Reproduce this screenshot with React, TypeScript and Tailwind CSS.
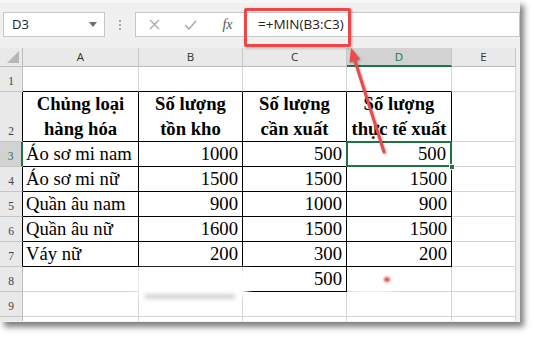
import React from 'react';

type DataRow = { n: number; a: string; b: string; c: string; d: string };

const rows: DataRow[] = [
  { n: 3, a: 'Áo sơ mi nam', b: '1000', c: '500', d: '500' },
  { n: 4, a: 'Áo sơ mi nữ', b: '1500', c: '1500', d: '1500' },
  { n: 5, a: 'Quần âu nam', b: '900', c: '1000', d: '900' },
  { n: 6, a: 'Quần âu nữ', b: '1600', c: '1500', d: '1500' },
  { n: 7, a: 'Váy nữ', b: '200', c: '300', d: '200' },
];

const heads = [
  ['Chủng loại', 'hàng hóa'],
  ['Số lượng', 'tồn kho'],
  ['Số lượng', 'cần xuất'],
  ['Số lượng', 'thực tế xuất'],
];

const grid = 'border-r border-b border-[#d4d4d4]';
const blackAll = 'border-r border-b border-black';
const blackBottom = 'border-r border-b border-r-[#d4d4d4] border-b-black';

const RowHead = ({ n, active, dark }: { n: string; active?: boolean; dark?: boolean }) => (
  <div
    className={
      active
        ? 'flex items-end justify-center bg-[#d2d2d2] border-b border-b-[#c6c6c6] border-r-2 border-r-[#217346] text-[#217346] text-[11.5px] leading-[20px]'
        : dark
        ? 'flex items-end justify-center bg-[#e9e9e9] border-b border-b-[#c6c6c6] border-r border-r-black text-[#444] text-[11.5px] leading-[20px]'
        : 'flex items-end justify-center bg-[#e9e9e9] border-b border-b-[#c6c6c6] border-r border-r-[#bdbdbd] text-[#444] text-[11.5px] leading-[20px]'
    }
  >
    {n}
  </div>
);

export default function App() {
  return (
    <div className="relative w-[535px] h-[340px] bg-white overflow-hidden font-['Open_Sans',sans-serif]">
      <div className="w-[520px] h-[322px] bg-[#f0f0f0] shadow-[4px_5px_6px_rgba(0,0,0,0.5)]">
        {/* toolbar */}
        <div className="h-[48px] border-t-[3px] border-t-[#f7f7f7]">
          <div className="flex pt-[9px] h-[34px]">
            <div className="ml-[3px] w-[102px] h-[25px] bg-white border border-[#c6c6c6] flex items-center justify-between pl-[8px] pr-[7px]">
              <span className="text-[13px] text-[#222]">D3</span>
              <svg width="8" height="5" viewBox="0 0 8 5">
                <path d="M0 0h8L4 5z" fill="#6e6e6e" />
              </svg>
            </div>
            <div className="w-[30px] flex flex-col items-center justify-center gap-[2px]">
              <div className="w-[2px] h-[2px] bg-[#a6a6a6]" />
              <div className="w-[2px] h-[2px] bg-[#a6a6a6]" />
              <div className="w-[2px] h-[2px] bg-[#a6a6a6]" />
            </div>
            <div className="flex-1 h-[25px] bg-white border border-[#c6c6c6] flex items-center">
              <div className="w-[36px] flex justify-center">
                <svg width="11" height="11" viewBox="0 0 11 11">
                  <path d="M1 1l9 9M10 1l-9 9" stroke="#a9a9a9" strokeWidth="1.3" />
                </svg>
              </div>
              <div className="w-[37px] flex justify-center">
                <svg width="13" height="10" viewBox="0 0 13 10">
                  <path d="M1 5l4 4 7-8" stroke="#a9a9a9" strokeWidth="1.5" fill="none" />
                </svg>
              </div>
              <div className="w-[37px] flex justify-center font-['Liberation_Serif',serif] italic text-[14px] text-[#555] leading-none">
                fx
              </div>
              <span className="pl-[12px] text-[13.5px] text-[#222]">=+MIN(B3:C3)</span>
            </div>
          </div>
        </div>

        {/* sheet */}
        <div className="w-[516px] bg-white grid grid-cols-[23px_116px_104px_104px_105px_64px] grid-rows-[19px_25px_50px_25px_25px_25px_25px_25px_25px_25px_4px] font-['Liberation_Serif',serif] text-[18.67px] text-black">
          {/* column headers */}
          <div className="relative bg-[#e9e9e9] border-r border-b border-[#bdbdbd]">
            <svg className="absolute right-[3px] bottom-[3px]" width="12" height="12" viewBox="0 0 12 12">
              <path d="M12 0v12H0z" fill="#b7b7b7" />
            </svg>
          </div>
          {['A', 'B', 'C'].map((c) => (
            <div key={c} className="flex items-center justify-center bg-[#e9e9e9] border-r border-r-[#c6c6c6] border-b border-b-[#bdbdbd] font-['Open_Sans',sans-serif] text-[11.5px] text-[#333]">
              {c}
            </div>
          ))}
          <div className="flex items-center justify-center bg-[#d2d2d2] border-r border-r-[#c6c6c6] border-b-2 border-b-[#217346] font-['Open_Sans',sans-serif] text-[11.5px] text-[#217346]">
            D
          </div>
          <div className="flex items-center justify-center bg-[#e9e9e9] border-r border-r-[#c6c6c6] border-b border-b-[#bdbdbd] font-['Open_Sans',sans-serif] text-[11.5px] text-[#333]">
            E
          </div>

          {/* row 1 */}
          <RowHead n="1" />
          <div className={blackBottom} />
          <div className={blackBottom} />
          <div className={blackBottom} />
          <div className={blackBottom} />
          <div className={grid} />

          {/* row 2 */}
          <RowHead n="2" dark />
          {heads.map((h, i) => (
            <div key={i} className={`${blackAll} flex flex-col items-center justify-end font-bold leading-[25px]`}>
              <span>{h[0]}</span>
              <span>{h[1]}</span>
            </div>
          ))}
          <div className={grid} />

          {/* rows 3-7 */}
          {rows.map((r) => (
            <React.Fragment key={r.n}>
              <RowHead n={String(r.n)} active={r.n === 3} dark />
              <div className={`${blackAll} flex items-end pl-[3px] leading-[24px] whitespace-nowrap`}>{r.a}</div>
              <div className={`${blackAll} flex items-end justify-end pr-[4px] leading-[24px]`}>{r.b}</div>
              <div className={`${blackAll} flex items-end justify-end pr-[4px] leading-[24px]`}>{r.c}</div>
              {r.n === 3 ? (
                <div className="relative border-r border-b border-black">
                  <div className="absolute -left-px -top-px w-[106px] h-[26px] border-2 border-[#217346] flex items-end justify-end pr-[4px] leading-[22px]">
                    {r.d}
                  </div>
                  <div className="absolute right-[-4px] bottom-[-4px] w-[6px] h-[6px] bg-[#217346] border border-white" />
                </div>
              ) : (
                <div className={`${blackAll} flex items-end justify-end pr-[4px] leading-[24px]`}>{r.d}</div>
              )}
              <div className={grid} />
            </React.Fragment>
          ))}

          {/* row 8 */}
          <RowHead n="8" />
          <div className={grid} />
          <div className="border-r border-[#d4d4d4]" />
          <div className={`${blackAll} flex items-end justify-end pr-[4px] leading-[24px]`}>500</div>
          <div className={grid} />
          <div className={grid} />

          {/* row 9 */}
          <RowHead n="9" />
          <div className={grid} />
          <div className={grid} />
          <div className={grid} />
          <div className={grid} />
          <div className={grid} />

          {/* partial row */}
          <div className="bg-[#e9e9e9] border-r border-[#bdbdbd]" />
          <div className="border-r border-[#d4d4d4]" />
          <div className="border-r border-[#d4d4d4]" />
          <div className="border-r border-[#d4d4d4]" />
          <div className="border-r border-[#d4d4d4]" />
          <div className="border-r border-[#d4d4d4]" />
        </div>
      </div>

      {/* smudges */}
      <div className="absolute left-[138px] top-[270px] w-[110px] h-[26px] bg-white blur-[3px]" />
      <div className="absolute left-[145px] top-[295px] w-[90px] h-[3px] bg-[#bbbbbb] blur-[2px]" />
      <div className="absolute left-[352px] top-[272px] w-[40px] h-[20px] bg-white blur-[2px]" />
      <div className="absolute left-[384px] top-[277px] w-[6px] h-[5px] rounded-full bg-[#e05050] blur-[1px]" />

      {/* callout */}
      <div className="absolute left-[244px] top-[8px] w-[107px] h-[39px] border-[3px] border-[#ef4646] rounded-[2px] shadow-[1px_1px_3px_rgba(0,0,0,0.3)]" />
      <svg className="absolute left-0 top-0 drop-shadow-[1px_1px_1px_rgba(0,0,0,0.35)]" width="535" height="340">
        <line x1="384" y1="152" x2="355" y2="61" stroke="#e94b4b" strokeWidth="3" strokeLinecap="round" />
        <path d="M351 48L360 59L349.5 62.5Z" fill="#e94b4b" />
      </svg>
    </div>
  );
}
